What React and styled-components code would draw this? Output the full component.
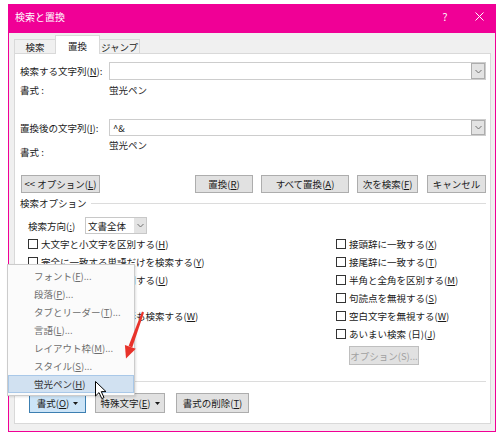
import React from 'react';
import styled, { createGlobalStyle } from 'styled-components';

const Global = createGlobalStyle`
  html, body { margin: 0; padding: 0; background: #ffffff; }
  body {
    font-family: "Noto Sans CJK JP", "Noto Sans", sans-serif;
    font-size: 9.5px;
    color: #1a1a1a;
  }
  * { box-sizing: border-box; }
`;

const PINK = '#f00096';

const Page = styled.div`
  position: relative;
  width: 504px;
  height: 436px;
  padding: 4px 8px 0;
  overflow: hidden;
`;

const Window = styled.div`
  width: 488px;
  height: 428px;
  display: flex;
  flex-direction: column;
`;

const TitleBar = styled.div`
  height: 29px;
  flex-shrink: 0;
  background: ${PINK};
  color: #fff;
  display: flex;
  align-items: center;
  padding: 0 0 5px 7px;
  font-size: 10px;
`;

const Title = styled.div`
  flex: 1;
`;

const TitleBtn = styled.div`
  width: 34px;
  display: flex;
  justify-content: center;
  align-items: center;
  font-size: 10.5px;
`;

const Body = styled.div`
  flex: 1;
  background: #f0f0f0;
  border: 1px solid ${PINK};
  border-top: none;
  padding: 2px 4px 7px 5px;
  display: flex;
  flex-direction: column;
`;

const Tabs = styled.div`
  display: flex;
  align-items: flex-end;
  height: 19px;
  margin-bottom: -1px;
  position: relative;
  z-index: 1;
`;

const Tab = styled.div`
  width: ${p => p.$w}px;
  height: ${p => (p.$active ? 19 : 15)}px;
  margin-left: ${p => (p.$first ? 0 : -1)}px;
  background: ${p => (p.$active ? '#ffffff' : '#f0f0f0')};
  border: 1px solid #d9d9d9;
  border-bottom: ${p => (p.$active ? 'none' : '1px solid #d9d9d9')};
  position: relative;
  z-index: ${p => (p.$active ? 2 : 1)};
  display: flex;
  justify-content: center;
  align-items: ${p => (p.$active ? 'flex-start' : 'center')};
  padding-top: ${p => (p.$active ? '3px' : '0')};
  color: #1a1a1a;
`;

const Panel = styled.div`
  flex: 1;
  background: #ffffff;
  border: 1px solid #d9d9d9;
  padding: 8px 4px 10px 5px;
  display: flex;
  flex-direction: column;
`;

const FieldRow = styled.div`
  display: flex;
  align-items: center;
  height: ${p => p.$h || 18}px;
  margin-top: ${p => p.$mt || 0}px;
`;

const Label = styled.div`
  width: ${p => p.$w || 89}px;
  flex-shrink: 0;
  white-space: nowrap;
`;

const Combo = styled.div`
  flex: 1;
  height: 100%;
  border: 1px solid #cdcdcd;
  background: #fff;
  display: flex;
  align-items: center;
  padding-left: 3px;
`;

const ComboText = styled.div`
  flex: 1;
  white-space: nowrap;
`;

const DropBtn = styled.div`
  width: ${p => p.$w || 14}px;
  align-self: stretch;
  background: #e3e3e3;
  border: 1px solid ${p => (p.$plain ? '#e3e3e3' : '#adadad')};
  display: flex;
  justify-content: center;
  align-items: center;
`;

const FormatRow = styled.div`
  display: flex;
  margin-top: ${p => p.$mt}px;
  height: ${p => p.$h}px;
  line-height: 12px;
`;

const FormatLabel = styled.div`
  width: 89px;
  flex-shrink: 0;
  padding-top: ${p => p.$pt || 0}px;
`;

const FormatValue = styled.div`
  color: #2a2a2a;
`;

const ButtonRow = styled.div`
  display: flex;
  align-items: stretch;
  height: ${p => p.$h}px;
  margin-top: ${p => p.$mt}px;
  padding-left: ${p => p.$pl || 0}px;
`;

const Button = styled.div`
  width: ${p => p.$w}px;
  margin-left: ${p => p.$ml || 0}px;
  background: ${p => (p.$focus ? '#cce4f7' : '#e1e1e1')};
  border: 1px solid ${p => (p.$focus ? '#3c7fb1' : p.$disabled ? '#bfbfbf' : '#adadad')};
  color: ${p => (p.$disabled ? '#a0a0a0' : '#1a1a1a')};
  display: flex;
  justify-content: center;
  align-items: center;
  gap: 4px;
  white-space: nowrap;
  flex-shrink: 0;
`;

const Spacer = styled.div`
  flex: 1;
`;

const GroupHeader = styled.div`
  display: flex;
  align-items: center;
  height: 12px;
  margin-top: ${p => p.$mt}px;
  line-height: 12px;
`;

const GroupLine = styled.div`
  flex: 1;
  height: 1px;
  background: #dcdcdc;
  margin-left: 4px;
`;

const DirRow = styled.div`
  display: flex;
  align-items: center;
  height: 17px;
  margin-top: 8px;
  padding-left: 8px;
`;

const Select = styled.div`
  width: 62px;
  height: 100%;
  border: 1px solid #c8c8c8;
  background: #fff;
  display: flex;
  align-items: center;
  padding-left: 2px;
`;

const Columns = styled.div`
  display: grid;
  grid-template-columns: 308px 1fr;
  margin-top: 1px;
  padding-left: 8px;
`;

const Column = styled.div`
  display: flex;
  flex-direction: column;
`;

const Check = styled.div`
  height: 18px;
  display: flex;
  align-items: center;
  gap: 3px;
  white-space: nowrap;
`;

const Box = styled.div`
  width: 10px;
  height: 10px;
  border: 1px solid #333;
  background: #fff;
  flex-shrink: 0;
`;

const OptBtnWrap = styled.div`
  display: flex;
  height: 19px;
  margin-top: 3px;
  padding-left: 13px;
`;

const Key = styled.span`
  text-decoration: underline;
  text-underline-offset: 1px;
`;

const Menu = styled.div`
  position: absolute;
  left: 7px;
  top: 264px;
  width: 128px;
  padding: 2px 0;
  background: #fbfbfb;
  border: 1px solid #cccccc;
  box-shadow: 1px 1px 2px rgba(0, 0, 0, 0.12);
  z-index: 10;
`;

const MenuItem = styled.div`
  height: 18px;
  display: flex;
  align-items: center;
  padding-left: 25px;
  color: ${p => (p.$active ? '#333' : '#6d6d6d')};
  background: ${p => (p.$active ? '#d1e1f1' : 'transparent')};
  border: 1px solid ${p => (p.$active ? '#a9c8e8' : 'transparent')};
  white-space: nowrap;
`;

const Overlay = styled.svg`
  position: absolute;
  left: 0;
  top: 0;
  z-index: 20;
  pointer-events: none;
`;

const Chevron = () => (
  <svg width="7" height="5" viewBox="0 0 7 5">
    <path d="M0.5 1 L3.5 4 L6.5 1" fill="none" stroke="#707070" strokeWidth="1" />
  </svg>
);

const Caret = () => (
  <svg width="5" height="3" viewBox="0 0 5 3">
    <path d="M0 0 L5 0 L2.5 3 Z" fill="#1a1a1a" />
  </svg>
);

const leftChecks = [
  ['大文字と小文字を区別する', 'H'],
  ['完全に一致する単語だけを検索する', 'Y'],
  ['ワイルドカードを使用する', 'U'],
  ['あいまい検索 (英)', 'K'],
  ['英単語の異なる活用形も検索する', 'W'],
];

const rightChecks = [
  ['接頭辞に一致する', 'X'],
  ['接尾辞に一致する', 'T'],
  ['半角と全角を区別する', 'M'],
  ['句読点を無視する', 'S'],
  ['空白文字を無視する', 'W'],
  ['あいまい検索 (日)', 'J'],
];

const menuItems = [
  ['フォント', 'F', '...'],
  ['段落', 'P', '...'],
  ['タブとリーダー', 'T', '...'],
  ['言語', 'L', '...'],
  ['レイアウト枠', 'M', '...'],
  ['スタイル', 'S', '...'],
  ['蛍光ペン', 'H', ''],
];

const CheckItem = ({ text, k }) => (
  <Check>
    <Box />
    <span>
      {text}(<Key>{k}</Key>)
    </span>
  </Check>
);

const Accel = ({ text, k, tail = '' }) => (
  <span>
    {text}(<Key>{k}</Key>){tail}
  </span>
);

export default function App() {
  return (
    <>
      <Global />
      <Page>
        <Window>
          <TitleBar>
            <Title>検索と置換</Title>
            <TitleBtn>?</TitleBtn>
            <TitleBtn>
              <svg width="9" height="9" viewBox="0 0 9 9">
                <path d="M0.5 0.5 L8.5 8.5 M8.5 0.5 L0.5 8.5" stroke="#fff" strokeWidth="1" />
              </svg>
            </TitleBtn>
          </TitleBar>
          <Body>
            <Tabs>
              <Tab $w={42} $first>検索</Tab>
              <Tab $w={45} $active>置換</Tab>
              <Tab $w={41}>ジャンプ</Tab>
            </Tabs>
            <Panel>
              <FieldRow $mt={0}>
                <Label><Accel text="検索する文字列" k="N" tail=":" /></Label>
                <Combo>
                  <ComboText />
                  <DropBtn><Chevron /></DropBtn>
                </Combo>
              </FieldRow>
              <FormatRow $mt={4} $h={12}>
                <FormatLabel>書式 :</FormatLabel>
                <FormatValue>蛍光ペン</FormatValue>
              </FormatRow>
              <FieldRow $mt={23} $h={17}>
                <Label><Accel text="置換後の文字列" k="I" tail=":" /></Label>
                <Combo>
                  <ComboText>^&amp;</ComboText>
                  <DropBtn><Chevron /></DropBtn>
                </Combo>
              </FieldRow>
              <FormatRow $mt={3} $h={19}>
                <FormatLabel $pt={7}>書式 :</FormatLabel>
                <FormatValue>蛍光ペン</FormatValue>
              </FormatRow>
              <ButtonRow $mt={17} $h={18} $pl={1}>
                <Button $w={79}><Accel text="<< オプション" k="L" /></Button>
                <Spacer />
                <Button $w={58}><Accel text="置換" k="R" /></Button>
                <Button $w={88} $ml={8}><Accel text="すべて置換" k="A" /></Button>
                <Button $w={61} $ml={8}><Accel text="次を検索" k="F" /></Button>
                <Button $w={59} $ml={9}>キャンセル</Button>
              </ButtonRow>
              <GroupHeader $mt={4}>
                検索オプション
                <GroupLine />
              </GroupHeader>
              <DirRow>
                <Label $w={57}><Accel text="検索方向" k=":" /></Label>
                <Select>
                  <ComboText>文書全体</ComboText>
                  <DropBtn $w={12} $plain><Chevron /></DropBtn>
                </Select>
              </DirRow>
              <Columns>
                <Column>
                  {leftChecks.map(([t, k]) => (
                    <CheckItem key={t} text={t} k={k} />
                  ))}
                </Column>
                <Column>
                  {rightChecks.map(([t, k]) => (
                    <CheckItem key={t} text={t} k={k} />
                  ))}
                  <OptBtnWrap>
                    <Button $w={70} $disabled>オプション(S)...</Button>
                  </OptBtnWrap>
                </Column>
              </Columns>
              <GroupHeader $mt={10}>
                置換
                <GroupLine />
              </GroupHeader>
              <ButtonRow $mt={6} $h={20} $pl={9}>
                <Button $w={57} $focus>
                  <Accel text="書式" k="O" />
                  <Caret />
                </Button>
                <Button $w={70} $ml={9}>
                  <Accel text="特殊文字" k="E" />
                  <Caret />
                </Button>
                <Button $w={73} $ml={11}><Accel text="書式の削除" k="T" /></Button>
              </ButtonRow>
            </Panel>
          </Body>
        </Window>

        <Menu>
          {menuItems.map(([t, k, s], i) => (
            <MenuItem key={t} $active={i === menuItems.length - 1}>
              <Accel text={t} k={k} tail={s} />
            </MenuItem>
          ))}
        </Menu>

        <Overlay width="504" height="436" viewBox="0 0 504 436">
          <polygon points="144,312.4 142,311.6 128.6,346.1 132.2,347.4" fill="#e8322a" />
          <polygon points="126,358.5 135.8,348.8 124.9,344.9" fill="#e8322a" />
          <path
            d="M95.5 381.5 L95.5 396 L99 392.6 L101.8 398.6 L104 397.6 L101.3 391.6 L106 391.6 Z"
            fill="#ffffff"
            stroke="#000000"
            strokeWidth="1"
            strokeLinejoin="round"
          />
        </Overlay>
      </Page>
    </>
  );
}
